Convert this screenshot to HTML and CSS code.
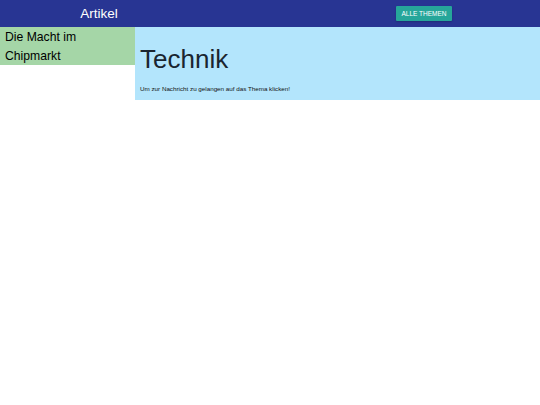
FILE: index.html
```html
<!DOCTYPE html>
<html lang="de">
<head>
<meta charset="utf-8">
<title>Artikel</title>
<link rel="stylesheet" href="styles.css">
</head>
<body>
  <header class="topbar">
    <div class="topbar-title">Artikel</div>
    <div class="topbar-actions">
      <button class="btn-topics">Alle Themen</button>
    </div>
  </header>
  <main class="layout">
    <aside class="sidebar">
      <div class="article-link">Die Macht im Chipmarkt</div>
    </aside>
    <section class="topic">
      <h1 class="topic-title">Technik</h1>
      <p class="topic-hint">Um zur Nachricht zu gelangen auf das Thema klicken!</p>
    </section>
  </main>
</body>
</html>
```

FILE: styles.css
```css
* { box-sizing: border-box; }

body {
  margin: 0;
  font-family: "Liberation Sans", Arial, sans-serif;
  color: #111;
  background: #fff;
}

.topbar {
  height: 27px;
  background: #283593;
  display: grid;
  grid-template-columns: 198px 1fr;
  align-items: center;
}

.topbar-title {
  color: #fff;
  font-size: 13.5px;
  text-align: center;
}

.topbar-actions {
  display: flex;
  align-items: center;
  padding-left: 198px;
}

.btn-topics {
  display: block;
  background: #26a69a;
  color: #fff;
  border: none;
  border-radius: 1px;
  font-family: inherit;
  font-size: 6.5px;
  text-transform: uppercase;
  height: 15px;
  width: 56px;
  padding: 0;
  box-shadow: 0 1px 2px rgba(0,0,0,0.2);
}

.layout {
  display: grid;
  grid-template-columns: 135px 1fr;
  align-items: start;
}

.sidebar {
  background: #a5d6a7;
  padding: 1px 5px 0;
}

.article-link {
  font-size: 12.2px;
  line-height: 18.5px;
  color: #000;
}

.topic {
  background: #b3e5fc;
  padding: 14px 5px 8px;
}

.topic-title {
  margin: 0;
  font-weight: normal;
  font-size: 26px;
  line-height: 36px;
  color: #1a2530;
}

.topic-hint {
  margin: 9px 0 0;
  font-size: 6.25px;
  line-height: 6px;
}
```
